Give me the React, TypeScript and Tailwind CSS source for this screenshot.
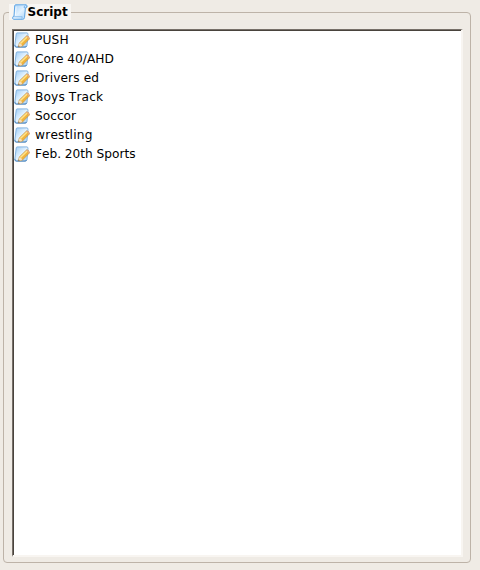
const items = [
  { label: 'PUSH', spacing: 'tracking-[0.16px]' },
  { label: 'Core 40/AHD', spacing: 'tracking-[0px]' },
  { label: 'Drivers ed', spacing: 'tracking-[0.12px]' },
  { label: 'Boys Track', spacing: 'tracking-[0.12px]' },
  { label: 'Soccor', spacing: 'tracking-[0px]' },
  { label: 'wrestling', spacing: 'tracking-[0.2px]' },
  { label: 'Feb. 20th Sports', spacing: 'tracking-[-0.03px]' },
];

function Gradients() {
  return (
    <defs>
      <linearGradient id="paper" x1="0" y1="0" x2="1" y2="1">
        <stop offset="0" stopColor="#9fcdf6" />
        <stop offset="0.5" stopColor="#e2f2ff" />
        <stop offset="1" stopColor="#a4d0f6" />
      </linearGradient>
    </defs>
  );
}

function ScrollIcon() {
  return (
    <svg className="block h-4 w-4 shrink-0" viewBox="0 0 16 16" fill="none">
      <Gradients />
      <path d="M3.5 .8H14Q15.3 1 15.1 2.5Q14.9 4 13.4 4.1L12.5 13.6Q12.3 15.3 10.7 15.3H1.7Q.5 15.1.6 13.8Q.7 12.3 2 12.1L2.7 2Q2.8 .9 3.5 .8Z" fill="url(#paper)" stroke="#5fa5e4" />
      <path d="M13.5 1.3Q12.1 1.5 12 3.7H13.7Q14.7 3.4 14.5 2.1Q14.3 1.2 13.5 1.3Z" fill="#d6edff" stroke="#5aa2e4" strokeWidth=".7" />
      <path d="M1.2 12.7H10.2L9.9 14.7" stroke="#7db6e9" strokeWidth=".8" />
      <path d="M4.1 2.5L3.4 11.5" stroke="#fff" strokeWidth=".8" />
    </svg>
  );
}

function EditIcon() {
  return (
    <svg className="block h-4 w-4 shrink-0" viewBox="0 0 16 16" fill="none">
      <path d="M3 .9H13Q14.2 1.1 14 2.6L13 13.4Q12.8 15 11.2 15H2Q.7 14.8.8 13.4L2.2 2Q2.3 1 3 .9Z" fill="url(#paper)" stroke="#7aaede" strokeWidth=".9" />
      <path d="M1 12.9V14Q1.3 15.1 2.4 15.1H11.1Q12.2 15 12.7 13.9" stroke="#477fb5" strokeWidth=".9" />
      <path d="M5.2 11.1L12.7 3.8Q14.9 3.9 15.6 6.8L8.5 14.1L4.4 15Z" fill="#f0b33c" stroke="#b88943" strokeWidth=".6" />
      <path d="M6.4 11.5L13.1 5" stroke="#ffe38a" strokeWidth="1.6" />
      <path d="M11.9 4.6L12.7 3.8Q14.9 4 15.6 6.8L14.7 7.7Q14.1 5.2 11.9 4.6Z" fill="#e8ad83" />
      <path d="M5.2 11.3Q7.7 11.5 8.3 14L4.4 14.9Z" fill="#f5dfbc" />
      <path d="M4.7 13.6L5.8 14.5L4.3 15Z" fill="#574a42" />
    </svg>
  );
}

export default function App() {
  return (
    <main className="h-[570px] w-[480px] overflow-hidden bg-[#efebe5] pl-[3px] pt-1 font-['DejaVu_Sans',sans-serif] text-black">
      <fieldset className="flex h-[559px] w-[468px] min-w-0 flex-col rounded-[4px] border border-[#bdb3a8] pb-[5px] pl-2 pr-2">
        <legend className="-ml-[3px] flex h-4 w-[62px] items-center bg-[#f8f6f3] pl-[3px] text-[12px] leading-4 font-bold">
          <ScrollIcon />
          <span className="-ml-[0.5px] whitespace-nowrap">Script</span>
        </legend>
        <div className="mt-[9px] w-[451px] flex-1 border-t border-r-2 border-b-2 border-l border-t-[#777069] border-r-[#f8f5f1] border-b-[#f8f5f1] border-l-[#777069]">
          <ul className="h-full border-t border-l border-[#49433d] bg-white pt-px [font-kerning:none]">
            {items.map(({ label, spacing }) => (
              <li key={label} className="flex h-[19px] items-start gap-[5px] text-[12.2px] leading-[17px] whitespace-nowrap">
                <EditIcon />
                <span className={spacing}>{label}</span>
              </li>
            ))}
          </ul>
        </div>
      </fieldset>
    </main>
  );
}
